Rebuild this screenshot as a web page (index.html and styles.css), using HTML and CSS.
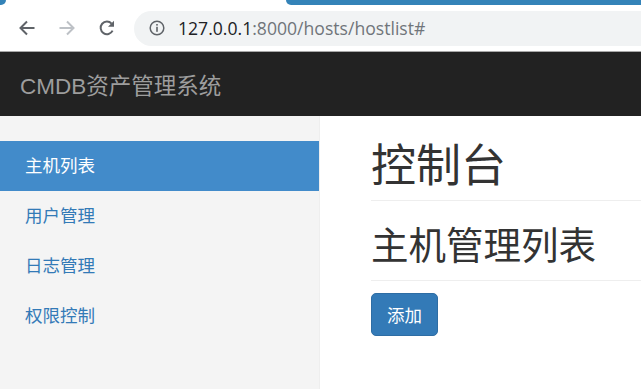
FILE: index.html
```html
<!DOCTYPE html>
<html lang="zh-CN">
<head>
    <meta charset="UTF-8">
    <title>CMDB资产管理系统</title>
    <link rel="stylesheet" href="styles.css">
</head>
<body>
    <!--thanh tab trình duyệt-->
    <div class="tab-strip">
        <span class="tab-left"></span>
        <span class="tab-active"></span>
    </div>
    <div class="toolbar">
        <div class="nav-buttons">
            <svg width="18" height="18" viewBox="0 0 18 18"><path d="M16.5 9H2.5M9 2.5L2.5 9 9 15.5" fill="none" stroke="#5f6368" stroke-width="2"/></svg>
            <svg width="18" height="18" viewBox="0 0 18 18"><path d="M1.5 9h14M9 2.5L15.5 9 9 15.5" fill="none" stroke="#bdc1c6" stroke-width="2"/></svg>
            <svg width="18" height="18" viewBox="0 0 18 18"><path d="M14.6 11.6A6.3 6.3 0 1 1 13.6 4.6" fill="none" stroke="#5f6368" stroke-width="2"/><path d="M16 1.8v6h-6z" fill="#5f6368"/></svg>
        </div>
        <div class="omnibox">
            <svg width="16" height="16" viewBox="0 0 16 16"><circle cx="8" cy="8" r="6.8" fill="none" stroke="#5f6368" stroke-width="1.5"/><rect x="7.2" y="6.8" width="1.6" height="5" fill="#5f6368"/><rect x="7.2" y="4" width="1.6" height="1.6" fill="#5f6368"/></svg>
            <span class="url"><b>127.0.0.1</b>:8000/hosts/hostlist#</span>
        </div>
    </div>

    <div class="navbar">
        <a class="brand" href="#">CMDB资产管理系统</a>
    </div>

    <div class="layout">
        <ul class="sidebar">
            <li class="active"><a href="#">主机列表</a></li>
            <li><a href="#">用户管理</a></li>
            <li><a href="#">日志管理</a></li>
            <li><a href="#">权限控制</a></li>
        </ul>
        <div class="main">
            <h1 class="page-header">控制台</h1>
            <h2 class="sub-header">主机管理列表</h2>
            <button class="btn-primary">添加</button>
        </div>
    </div>
</body>
</html>
```
FILE: styles.css
```css
*{
    box-sizing: border-box;
    padding: 0;
    margin: 0;
}
body{
    font-family: "Liberation Sans", "Noto Sans CJK SC", sans-serif;
    font-size: 17.5px;
    color: #333;
    background: #fff;
    height: 389px;
    overflow: hidden;
}
a{
    text-decoration: none;
}
/*trình duyệt*/
.tab-strip{
    height: 5px;
    display: flex;
    justify-content: space-between;
    background: #fff;
}
.tab-left{
    width: 6px;
    background: #3483b8;
    border-bottom-right-radius: 5px;
}
.tab-active{
    width: 355px;
    background: #3483b8;
    border-bottom-left-radius: 8px;
}
.toolbar{
    height: 47px;
    display: flex;
    align-items: center;
    border-bottom: 1px solid #a8a8a8;
}
.nav-buttons{
    display: flex;
    gap: 22px;
    padding-left: 18px;
    width: 134px;
}
.omnibox{
    flex: 1;
    height: 35px;
    margin-right: -20px;
    background: #f1f3f4;
    border-radius: 18px;
    display: flex;
    align-items: center;
    padding-left: 15px;
    gap: 13px;
}
.omnibox svg{
    flex-shrink: 0;
}
.url{
    font-family: "Open Sans", "Liberation Sans", sans-serif;
    font-size: 17.6px;
    color: #70757a;
}
.url b{
    font-weight: normal;
    color: #202124;
}
/*thanh điều hướng*/
.navbar{
    height: 64px;
    background: #222;
    display: flex;
    align-items: center;
    padding-left: 20px;
}
.brand{
    font-size: 22.5px;
    color: #9d9d9d;
}
.layout{
    display: flex;
    height: 273px;
}
.sidebar{
    list-style: none;
    width: 320px;
    padding-top: 25px;
    background: #f4f4f4;
    border-right: 1px solid #eee;
}
.sidebar a{
    display: block;
    height: 50px;
    line-height: 50px;
    padding-left: 25px;
    color: #337ab7;
    font-size: 17.5px;
}
.sidebar .active a{
    background: #428bca;
    color: #fff;
}
.main{
    flex: 1;
    padding-left: 51px;
}
.main h1, .main h2{
    font-family: "Noto Sans CJK SC", sans-serif;
    font-weight: 400;
    color: #333;
    border-bottom: 1px solid #eee;
}
.page-header{
    font-size: 45px;
    line-height: 50px;
    padding-top: 22px;
    padding-bottom: 12px;
}
.sub-header{
    font-size: 37.5px;
    line-height: 44px;
    padding-top: 20px;
    padding-bottom: 15px;
}
.btn-primary{
    margin-top: 12px;
    width: 67px;
    height: 43px;
    font-family: "Noto Sans CJK SC", sans-serif;
    font-size: 17.5px;
    color: #fff;
    background: #337ab7;
    border: 1px solid #2e6da4;
    border-radius: 5px;
}
```
